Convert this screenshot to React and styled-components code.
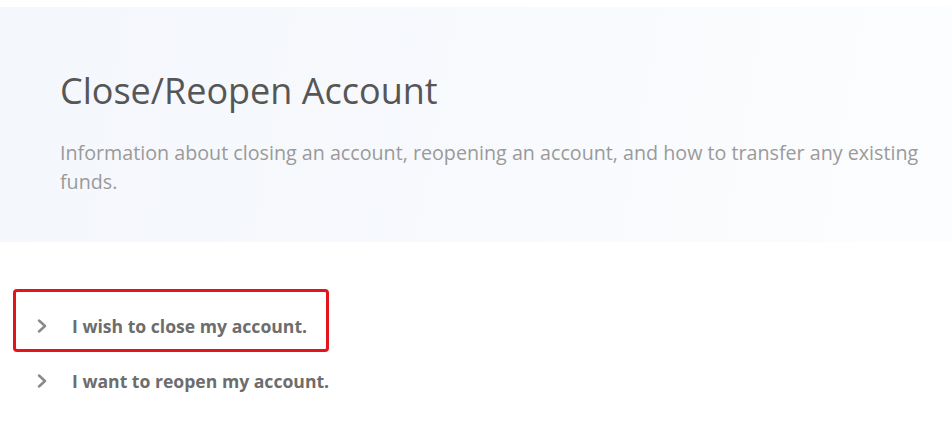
import React from "react";
import styled, { createGlobalStyle } from "styled-components";

const GlobalStyle = createGlobalStyle`
  html, body {
    margin: 0;
    padding: 0;
    background: #ffffff;
    font-family: "Open Sans", "Noto Sans", Arial, sans-serif;
  }
`;

const Page = styled.div`
  width: 952px;
  height: 435px;
  overflow: hidden;
  background: #fff;
  padding-top: 7px;
  box-sizing: border-box;
`;

const Hero = styled.header`
  height: 235px;
  box-sizing: border-box;
  padding: 63px 20px 0 60px;
  background: linear-gradient(100deg, #f4f7fc 0%, #f7f9fd 45%, #fcfdfe 100%);
`;

const Title = styled.h1`
  margin: 0;
  font-size: 36px;
  line-height: 42px;
  font-weight: 400;
  color: #565656;
`;

const Lead = styled.p`
  margin: 26px 0 0;
  max-width: 880px;
  font-size: 19.7px;
  line-height: 29px;
  color: #9a9a9a;
`;

const List = styled.ul`
  list-style: none;
  margin: 72px 0 0;
  padding: 0 0 0 37px;
  display: flex;
  flex-direction: column;
  gap: 31px;
`;

const Item = styled.li`
  position: relative;
  display: flex;
  align-items: center;
  gap: 25px;
  height: 24px;
`;

const Highlight = styled.span`
  position: absolute;
  top: -25px;
  bottom: -14px;
  left: -24px;
  width: 316px;
  box-sizing: border-box;
  border: 3px solid #e2141c;
  border-radius: 4px;
  pointer-events: none;
`;

const Label = styled.span`
  font-size: 17.6px;
  font-weight: 700;
  color: #6d6d6d;
  white-space: nowrap;
`;

const Chevron = () => (
  <svg width="10" height="14" viewBox="0 0 10 14">
    <polyline
      points="2,1.5 8,7 2,12.5"
      fill="none"
      stroke="#888888"
      strokeWidth="2.4"
      strokeLinecap="round"
      strokeLinejoin="round"
    />
  </svg>
);

const questions = [
  { text: "I wish to close my account.", marked: true },
  { text: "I want to reopen my account.", marked: false },
];

export default function App() {
  return (
    <Page>
      <GlobalStyle />
      <Hero>
        <Title>Close/Reopen Account</Title>
        <Lead>
          Information about closing an account, reopening an account, and how
          to transfer any existing funds.
        </Lead>
      </Hero>
      <List>
        {questions.map((q) => (
          <Item key={q.text}>
            {q.marked && <Highlight />}
            <Chevron />
            <Label>{q.text}</Label>
          </Item>
        ))}
      </List>
    </Page>
  );
}
